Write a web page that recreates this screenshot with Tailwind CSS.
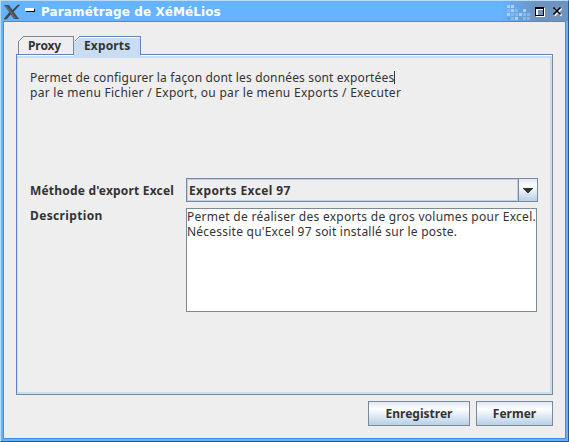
<!DOCTYPE html>
<html lang="fr">
<head>
<meta charset="utf-8">
<title>Paramétrage de XéMéLios</title>
<script src="https://cdn.jsdelivr.net/npm/@tailwindcss/browser@4"></script>
</head>
<body class="w-[569px] h-[442px] overflow-hidden text-[#333]" style="font-family:'Noto Sans','Open Sans',sans-serif">
<div class="w-[569px] h-[442px] flex flex-col bg-[#66b3ff] border border-t-[#b8dcff] border-l-[#b8dcff] border-r-[#2c5a8a] border-b-[#2c5a8a]">
  <header class="h-5 flex items-center shrink-0 bg-gradient-to-r from-[#66b3ff] from-[500px] to-[#6c94bf] to-[535px]">
    <svg class="ml-[3px] mt-px w-4 h-4 shrink-0" viewBox="0 0 16 16">
      <path d="M0 1h5l10 14h-5z" fill="#4a4f55"/>
      <path d="M14 1h1.500L9 8 7.800 7zM0 15l6-7 1.300 1.500L2.500 15z" fill="#3d4248" stroke="#3d4248" stroke-width=".7"/>
      <path d="M2 2l9 12" stroke="#777d84" stroke-width="1"/>
    </svg>
    <svg class="ml-[5px] -mt-0.5 w-[10px] h-[6px] shrink-0" viewBox="0 0 10 6" shape-rendering="crispEdges"><path d="M1 2h9v3H1z" fill="#000"/><path d="M0 1h9v3H0z" fill="#fff"/></svg>
    <h1 class="ml-[6px] mt-[2px] text-[12px] leading-5 font-bold text-white whitespace-nowrap tracking-[0.12px]" style="font-family:'DejaVu Sans',sans-serif">Paramétrage de XéMéLios</h1>
    <svg class="ml-auto mt-px w-[62px] h-[18px] shrink-0" viewBox="506 2 62 18" shape-rendering="crispEdges">
      <g fill="#a8d2fb"><path d="M507 4h3v3h-3zM511 4h3v3h-3zM511 8h3v3h-3zM523 8h3v3h-3zM507 12h3v3h-3zM519 12h3v3h-3zM515 16h3v3h-3z"/></g>
      <g fill="#85b9ed"><path d="M507 8h3v3h-3zM515 8h3v3h-3zM511 12h3v3h-3zM515 12h3v3h-3zM523 12h3v3h-3zM511 16h3v3h-3zM523 16h3v3h-3zM527 12h3v3h-3z"/></g>
      <g fill="#5aa3ed"><path d="M519 4h3v3h-3zM507 16h3v3h-3zM519 16h3v3h-3zM519 8h3v3h-3z"/></g>
      <path d="M527 16h3v3h-3z" fill="#8fb2d6"/>
      <path d="M536 7h9v9h-9zM538 9v5h5V9z" fill="#fff" fill-rule="evenodd"/>
      <path d="M535 6h9v9h-9zM536 8v6h7V8z" fill="#000" fill-rule="evenodd"/>
      <path d="M536 8h1v6h-1zM537 8h6v1h-6z" fill="#fff"/>
      <g fill="none" stroke-width="2" shape-rendering="auto"><path d="M554.500 7.500l7 7M561.500 7.500l-7 7" stroke="#fff"/><path d="M553.500 6.500l7 7M560.500 6.500l-7 7" stroke="#000" stroke-width="1.700"/></g>
    </svg>
  </header>
  <main class="mx-[2px] mb-[2px] grow border border-[#3d8fe6] bg-[#eee] pt-[14px] pl-3 pr-3">
    <nav class="relative z-10 ml-[2px] h-[22px] -mb-1 flex">
      <svg class="absolute left-0 top-0" width="125" height="22" viewBox="0 0 125 22" shape-rendering="crispEdges">
        <path d="M.5 18V5.500L5.500.500H55.500V18" fill="#eee" stroke="#7a8a99"/>
        <path d="M56 22V6L61 0H123V22z" fill="#c8ddf2"/>
        <path d="M57 5.500L61 1.500H122" fill="none" stroke="#fff"/>
        <path d="M56.500 5.500L61.500.500H122.500V18.500" fill="none" stroke="#6382bf"/>
        <path d="M56 18h1v1h-1z" fill="#c8ddf2"/>
      </svg>
      <span class="relative ml-[10px] w-[56px] text-[12px] leading-[19px] font-bold tracking-[-0.1px]">Proxy</span>
      <span class="relative text-[12px] leading-[19px] font-bold tracking-[0.15px]">Exports</span>
    </nav>
    <section class="w-[537px] h-[341px] border border-t-[#6382bf] border-l-[#6382bf] border-r-[#7a8a99] border-b-[#7a8a99]">
      <div class="h-full border-t border-t-white">
      <div class="h-full border-l border-t-2 border-r-2 border-b-2 border-[#c8ddf2] pl-3 pt-[12px]">
        <div class="h-[108px] text-[12px] leading-[15px] whitespace-nowrap">
          <p class="flex items-center tracking-[0.15px]"><span>Permet de configurer la façon dont les données sont exportées</span><i class="w-px h-[13px] bg-[#333]"></i></p>
          <p class="tracking-[0.28px]">par le menu Fichier / Export, ou par le menu Exports / Executer</p>
        </div>
        <div class="grid grid-cols-[156px_352px] gap-y-[6px] text-[12px]">
          <label class="pt-px font-bold leading-[23px] whitespace-nowrap tracking-[0.19px]">Méthode d'export Excel</label>
          <div class="h-6 flex border border-[#7a8a99]">
            <div class="grow border border-[#b8cfe5] pl-px font-bold leading-[22px] tracking-[0.38px]">Exports Excel 97</div>
            <div class="w-[19px] border-l border-[#7a8a99] flex items-center justify-center bg-gradient-to-b from-[#dde8f3] via-white via-30% to-[#b8cfe5]">
              <svg width="10" height="5" viewBox="0 0 10 5" shape-rendering="crispEdges"><path d="M0 0h10v1H9v1H8v1H7v1H6v1H4V4H3V3H2V2H1V1H0z" fill="#333"/></svg>
            </div>
          </div>
          <label class="font-bold leading-4 tracking-[0.36px]">Description</label>
          <div class="w-[351px] h-[104px] border border-[#7a8a99] bg-white leading-[15px] whitespace-nowrap overflow-hidden">
            <p class="tracking-[0.27px]">Permet de réaliser des exports de gros volumes pour Excel.</p>
            <p class="tracking-[0.23px]">Nécessite qu'Excel 97 soit installé sur le poste.</p>
          </div>
        </div>
      </div>
      </div>
    </section>
    <footer class="mt-[6px] w-[537px] flex justify-end gap-[6px] text-[12px] font-bold">
      <button class="w-[102px] h-[25px] border border-[#7a8a99] bg-gradient-to-b from-[#dde8f3] via-white via-30% to-[#b8cfe5]">Enregistrer</button>
      <button class="w-[77px] h-[25px] border border-[#7a8a99] bg-gradient-to-b from-[#dde8f3] via-white via-30% to-[#b8cfe5]">Fermer</button>
    </footer>
  </main>
</div>
</body>
</html>
